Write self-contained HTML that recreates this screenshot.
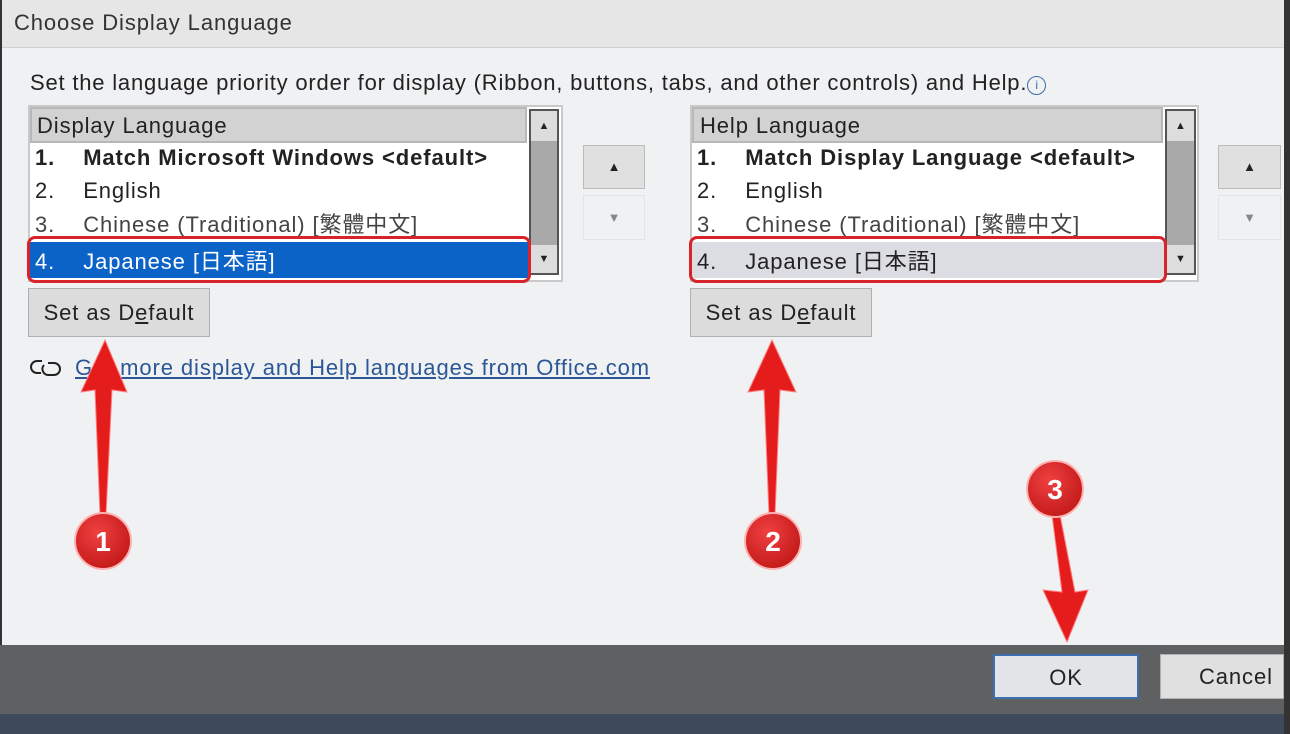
<!DOCTYPE html>
<html><head><meta charset="utf-8"><style>
*{margin:0;padding:0;box-sizing:border-box}
body{width:1290px;height:734px;overflow:hidden;background:#f0f1f3;font-family:"Liberation Sans","Noto Sans CJK JP",sans-serif;color:#222;position:relative}
.a{position:absolute}
.t{font-size:22px;white-space:nowrap;line-height:26px;letter-spacing:0.9px}
.list{position:absolute;background:#fff;border:2px solid #c9c9c9}
.hdr{position:absolute;background:#d2d2d2;border:2px solid #b8b8b8}
.sb{position:absolute;background:#a9a9a9;border:2px solid #555}
.btn{position:absolute;background:#dcdcdc;border:1px solid #b0b0b0;font-size:22px;text-align:center;letter-spacing:0.9px}
.arr{position:absolute;background:#e0e0e0;border:1px solid #bbb}
</style></head><body>
<div class="a" style="left:0;top:0;width:1284px;height:48px;background:#e6e6e6;border-bottom:1px solid #d0d0d0"></div>
<div class="a t" style="left:14px;top:10px;color:#333">Choose Display Language</div>
<div class="a" style="left:1284px;top:0;width:6px;height:734px;background:#333"></div>
<div class="a" style="left:0;top:0;width:2px;height:734px;background:#333"></div>
<div class="a t" style="left:30px;top:70px;letter-spacing:0.8px">Set the language priority order for display (Ribbon, buttons, tabs, and other controls) and Help.<span style="display:inline-block;width:19px;height:19px;border:1.5px solid #3a6ea5;border-radius:50%;font-size:12px;color:#3a6ea5;text-align:center;line-height:16px;vertical-align:1px;letter-spacing:0">i</span></div>

<div class="list" style="left:28px;top:105px;width:535px;height:177px"></div>
<div class="hdr" style="left:30px;top:107px;width:497px;height:36px"></div>
<div class="a t" style="left:37px;top:113px">Display Language</div>
<div class="sb" style="left:529px;top:109px;width:30px;height:166px"></div>
<div class="a" style="left:531px;top:111px;width:26px;height:30px;background:#ddd;font-size:11px;text-align:center;line-height:30px">▲</div>
<div class="a" style="left:531px;top:245px;width:26px;height:28px;background:#ddd;font-size:11px;text-align:center;line-height:28px">▼</div>
<div class="a t" style="left:35px;top:145px;font-weight:bold">1.&nbsp;&nbsp;&nbsp;&nbsp;Match Microsoft Windows &lt;default&gt;</div>
<div class="a t" style="left:35px;top:178px">2.&nbsp;&nbsp;&nbsp;&nbsp;English</div>
<div class="a t" style="left:35px;top:212px;color:#444">3.&nbsp;&nbsp;&nbsp;&nbsp;Chinese (Traditional) [繁體中文]</div>
<div class="a" style="left:30px;top:242px;width:498px;height:36px;background:#0b63c7"></div>
<div class="a t" style="left:35px;top:249px;color:#fff">4.&nbsp;&nbsp;&nbsp;&nbsp;Japanese [日本語]</div>
<div class="a" style="left:27px;top:236px;width:504px;height:47px;border:3px solid #d8232a;border-radius:8px"></div>
<div class="arr" style="left:583px;top:145px;width:62px;height:44px;font-size:13px;text-align:center;line-height:42px">▲</div>
<div class="a" style="left:583px;top:195px;width:62px;height:45px;border:1px solid #e4e4e4;font-size:13px;text-align:center;line-height:43px;color:#888">▼</div>
<div class="btn" style="left:28px;top:288px;width:182px;height:49px;line-height:47px">Set as D<u>e</u>fault</div>

<div class="list" style="left:690px;top:105px;width:509px;height:177px"></div>
<div class="hdr" style="left:692px;top:107px;width:471px;height:36px"></div>
<div class="a t" style="left:700px;top:113px">Help Language</div>
<div class="sb" style="left:1165px;top:109px;width:31px;height:166px"></div>
<div class="a" style="left:1167px;top:111px;width:27px;height:30px;background:#ddd;font-size:11px;text-align:center;line-height:30px">▲</div>
<div class="a" style="left:1167px;top:245px;width:27px;height:28px;background:#ddd;font-size:11px;text-align:center;line-height:28px">▼</div>
<div class="a t" style="left:697px;top:145px;font-weight:bold">1.&nbsp;&nbsp;&nbsp;&nbsp;Match Display Language &lt;default&gt;</div>
<div class="a t" style="left:697px;top:178px">2.&nbsp;&nbsp;&nbsp;&nbsp;English</div>
<div class="a t" style="left:697px;top:212px;color:#444">3.&nbsp;&nbsp;&nbsp;&nbsp;Chinese (Traditional) [繁體中文]</div>
<div class="a" style="left:692px;top:242px;width:472px;height:36px;background:#dcdde3"></div>
<div class="a t" style="left:697px;top:249px">4.&nbsp;&nbsp;&nbsp;&nbsp;Japanese [日本語]</div>
<div class="a" style="left:689px;top:236px;width:478px;height:47px;border:3px solid #d8232a;border-radius:8px"></div>
<div class="arr" style="left:1218px;top:145px;width:63px;height:44px;font-size:13px;text-align:center;line-height:42px">▲</div>
<div class="a" style="left:1218px;top:195px;width:63px;height:45px;border:1px solid #e4e4e4;font-size:13px;text-align:center;line-height:43px;color:#888">▼</div>
<div class="btn" style="left:690px;top:288px;width:182px;height:49px;line-height:47px">Set as D<u>e</u>fault</div>

<svg class="a" style="left:28px;top:355px" width="36" height="26" viewBox="0 0 36 26"><g fill="none" stroke="#222" stroke-width="2"><path d="M14 6 H9 a6 6 0 0 0 0 12 h4"/><path d="M20 8 h6 a6 6 0 0 1 0 12 h-6 a6 6 0 0 1 -4 -10"/></g></svg>
<div class="a t" style="left:75px;top:355px;color:#2b5797;text-decoration:underline">Get more display and Help languages from Office.com</div>

<div class="a" style="left:0;top:645px;width:1284px;height:72px;background:#5f6062"></div>
<div class="a" style="left:0;top:714px;width:1284px;height:20px;background:#3e4a5c"></div>
<div class="btn" style="left:993px;top:654px;width:146px;height:45px;line-height:43px;border:2px solid #3d6fb0;background:#e2e4e8">OK</div>
<div class="btn" style="left:1160px;top:654px;width:124px;height:45px;line-height:43px;text-align:left;padding-left:38px;background:#e0e0e0">Cancel</div>

<svg class="a" style="left:0;top:0" width="1290" height="734">
<defs><radialGradient id="g" cx="40%" cy="35%" r="70%"><stop offset="0" stop-color="#f04040"/><stop offset="1" stop-color="#c01818"/></radialGradient></defs>
<g fill="#e51c1c" stroke="#ff8080" stroke-width="1">
<path d="M105 340 L127 392 L112 390 L106 515 L100 515 L95 390 L81 392 Z"/>
<path d="M772 340 L796 392 L780 390 L775 515 L769 515 L764 390 L748 392 Z"/>
<path d="M1067 642 L1088 590 L1075 592 L1060 515 L1052 515 L1062 592 L1043 590 Z"/>
</g>
<g fill="url(#g)" stroke="#ffb0b0" stroke-width="2">
<circle cx="103" cy="541" r="28"/><circle cx="773" cy="541" r="28"/><circle cx="1055" cy="489" r="28"/>
</g>
<g fill="#fff" font-family="Liberation Sans" font-weight="bold" font-size="28" text-anchor="middle">
<text x="103" y="551">1</text><text x="773" y="551">2</text><text x="1055" y="499">3</text>
</g>
</svg>
</body></html>
